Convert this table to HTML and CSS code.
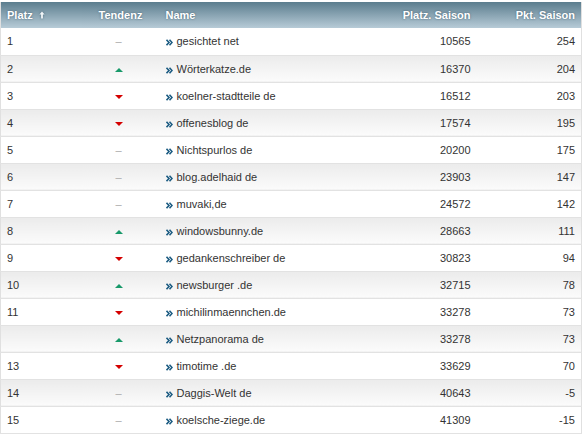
FILE: index.html
```html
<!DOCTYPE html>
<html>
<head>
<meta charset="utf-8">
<link rel="stylesheet" href="styles.css">
</head>
<body>
<svg class="defs" width="0" height="0"><defs><symbol id="dbl" viewBox="0 0 7 7"><path d="M0.5 0.8 L3 3.5 L0.5 6.2 M3.5 0.8 L6 3.5 L3.5 6.2" fill="none" stroke="#1b5b82" stroke-width="1.6"/></symbol></defs></svg>
<table class="rank">
<colgroup>
<col class="c-platz"><col class="c-tend"><col class="c-name"><col class="c-ps"><col class="c-pkt">
</colgroup>
<thead>
<tr>
<th class="l">Platz <svg class="sort" viewBox="0 0 6 8"><path d="M3 0.5 L5.6 3.6 H3.9 V7.5 H2.1 V3.6 H0.4 Z" fill="#f2f6f8"/></svg></th>
<th class="c">Tendenz</th>
<th class="l name-h">Name</th>
<th class="r">Platz. Saison</th>
<th class="r">Pkt. Saison</th>
</tr>
</thead>
<tbody>
<tr><td>1</td><td class="c"><span class="same">&ndash;</span></td><td class="nm"><svg class="ar"><use href="#dbl"/></svg>gesichtet net</td><td class="r">10565</td><td class="r">254</td></tr>
<tr><td>2</td><td class="c"><span class="up"></span></td><td class="nm"><svg class="ar"><use href="#dbl"/></svg>Wörterkatze.de</td><td class="r">16370</td><td class="r">204</td></tr>
<tr><td>3</td><td class="c"><span class="down"></span></td><td class="nm"><svg class="ar"><use href="#dbl"/></svg>koelner-stadtteile de</td><td class="r">16512</td><td class="r">203</td></tr>
<tr><td>4</td><td class="c"><span class="down"></span></td><td class="nm"><svg class="ar"><use href="#dbl"/></svg>offenesblog de</td><td class="r">17574</td><td class="r">195</td></tr>
<tr><td>5</td><td class="c"><span class="same">&ndash;</span></td><td class="nm"><svg class="ar"><use href="#dbl"/></svg>Nichtspurlos de</td><td class="r">20200</td><td class="r">175</td></tr>
<tr><td>6</td><td class="c"><span class="same">&ndash;</span></td><td class="nm"><svg class="ar"><use href="#dbl"/></svg>blog.adelhaid de</td><td class="r">23903</td><td class="r">147</td></tr>
<tr><td>7</td><td class="c"><span class="same">&ndash;</span></td><td class="nm"><svg class="ar"><use href="#dbl"/></svg>muvaki,de</td><td class="r">24572</td><td class="r">142</td></tr>
<tr><td>8</td><td class="c"><span class="up"></span></td><td class="nm"><svg class="ar"><use href="#dbl"/></svg>windowsbunny.de</td><td class="r">28663</td><td class="r">111</td></tr>
<tr><td>9</td><td class="c"><span class="down"></span></td><td class="nm"><svg class="ar"><use href="#dbl"/></svg>gedankenschreiber de</td><td class="r">30823</td><td class="r">94</td></tr>
<tr><td>10</td><td class="c"><span class="up"></span></td><td class="nm"><svg class="ar"><use href="#dbl"/></svg>newsburger .de</td><td class="r">32715</td><td class="r">78</td></tr>
<tr><td>11</td><td class="c"><span class="down"></span></td><td class="nm"><svg class="ar"><use href="#dbl"/></svg>michilinmaennchen.de</td><td class="r">33278</td><td class="r">73</td></tr>
<tr><td></td><td class="c"><span class="up"></span></td><td class="nm"><svg class="ar"><use href="#dbl"/></svg>Netzpanorama de</td><td class="r">33278</td><td class="r">73</td></tr>
<tr><td>13</td><td class="c"><span class="down"></span></td><td class="nm"><svg class="ar"><use href="#dbl"/></svg>timotime .de</td><td class="r">33629</td><td class="r">70</td></tr>
<tr><td>14</td><td class="c"><span class="same">&ndash;</span></td><td class="nm"><svg class="ar"><use href="#dbl"/></svg>Daggis-Welt de</td><td class="r">40643</td><td class="r">-5</td></tr>
<tr><td>15</td><td class="c"><span class="same">&ndash;</span></td><td class="nm"><svg class="ar"><use href="#dbl"/></svg>koelsche-ziege.de</td><td class="r">41309</td><td class="r">-15</td></tr>
</tbody>
</table>
</body>
</html>
```

FILE: styles.css
```css
html, body { margin: 0; padding: 0; background: #fff; }
body { padding: 2px 0 0 0; font-family: "Liberation Sans", Arial, sans-serif; font-size: 11px; color: #333; }
.defs { display: block; width: 0; height: 0; overflow: hidden; }
.rank { border-collapse: collapse; table-layout: fixed; width: 582px; border-left: 1px solid #e0e0e0; border-right: 1px solid #e0e0e0; }
.c-platz { width: 81px; }
.c-tend { width: 78px; }
.c-name { width: 220px; }
.c-ps { width: 97px; }
.c-pkt { width: 105px; }
.rank th { height: 26px; padding: 0 6px; color: #fff; font-weight: bold; font-size: 11px; text-shadow: 0 0 2px rgba(40,70,90,0.7);
  background: linear-gradient(#5b7d8e, #b7cbd7); box-sizing: border-box; }
.rank td { height: 27px; padding: 0 6px; box-sizing: border-box; border-bottom: 1px solid #e2e2e2; font-size: 11px; color: #333; }
.rank tbody tr:nth-child(even) td { background: linear-gradient(#ebebeb, #fbfbfb); }
.l { text-align: left; }
.c { text-align: center; }
.r { text-align: right; }
.name-h { padding-left: 6px; }
.sort { width: 6px; height: 8px; margin-left: 3px; vertical-align: 0; filter: drop-shadow(0 0 1px rgba(40,70,90,0.6)); }
.same { color: #aaa; }
.up { display: inline-block; width: 0; height: 0; border-left: 4px solid transparent; border-right: 4px solid transparent; border-bottom: 4px solid #18996a; vertical-align: middle; margin-left: -4px; }
.down { display: inline-block; width: 0; height: 0; border-left: 4px solid transparent; border-right: 4px solid transparent; border-top: 4px solid #d40000; vertical-align: middle; margin-left: -4px; }
.c .same { margin-left: -4px; }
.nm { white-space: nowrap; }
.ar { width: 7px; height: 7px; vertical-align: -1px; margin-left: 0; margin-right: 4px; }
```
